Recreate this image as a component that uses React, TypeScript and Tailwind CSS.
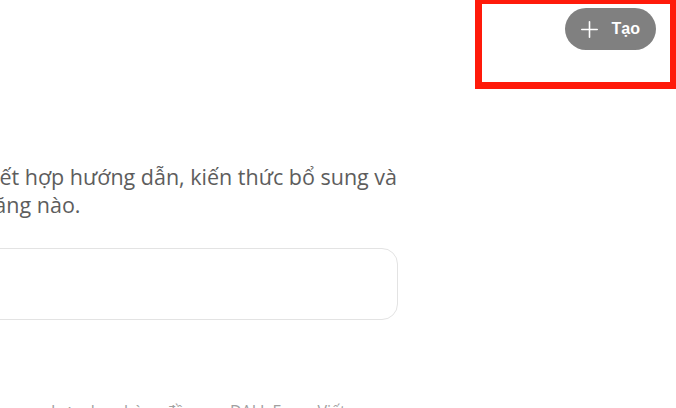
import React from "react";

export default function App() {
  return (
    <div className="relative h-[408px] w-[676px] overflow-hidden bg-white" style={{ fontFamily: '"Open Sans", "Noto Sans", sans-serif' }}>
      <div className="flex justify-end pr-[20px] pt-[8px]">
        <button
          className="flex h-[42px] items-center gap-[14px] rounded-full bg-[#808080] pl-[16px] pr-[16px] text-[16px] font-bold text-white"
          style={{ fontFamily: '"Liberation Sans", Arial, sans-serif' }}
        >
          <svg width="17" height="17" viewBox="0 0 17 17" fill="none" stroke="white" strokeWidth="1.6" strokeLinecap="round">
            <path d="M8.5 0.8V16.2M0.8 8.5H16.2" />
          </svg>
          <span>Tạo</span>
        </button>
      </div>

      <div className="ml-[-366px] mt-[113px] flex w-[764px] flex-col">
        <div className="whitespace-nowrap text-center text-[21.5px] leading-[28px] text-[#5d5d5d]">
          <div className="ml-[-27px]">Tạo phiên bản tùy chỉnh của ChatGPT kết hợp hướng dẫn, kiến thức bổ sung và</div>
          <div className="ml-[-64px]">bất kỳ kỹ năng nào.</div>
        </div>
        <div className="mt-[29px] h-[72px] w-full rounded-[16px] border border-[#e3e3e3] bg-white" />
        <div className="mr-[20px] mt-[80px] flex gap-[36px] overflow-hidden whitespace-nowrap pl-[417px] text-[16px] leading-[22px] text-[#a0a0a0]">
          <span>Lựa chọn hàng đầu</span>
          <span>DALL·E</span>
          <span>Viết</span>
          <span>Năng suất</span>
          <span>Nghiên cứu &amp; Phân tích</span>
        </div>
      </div>

      <div className="pointer-events-none absolute left-[475px] top-[-3px] h-[92px] w-[202px] border-[7px] border-[#ff1a0a]" />
    </div>
  );
}
